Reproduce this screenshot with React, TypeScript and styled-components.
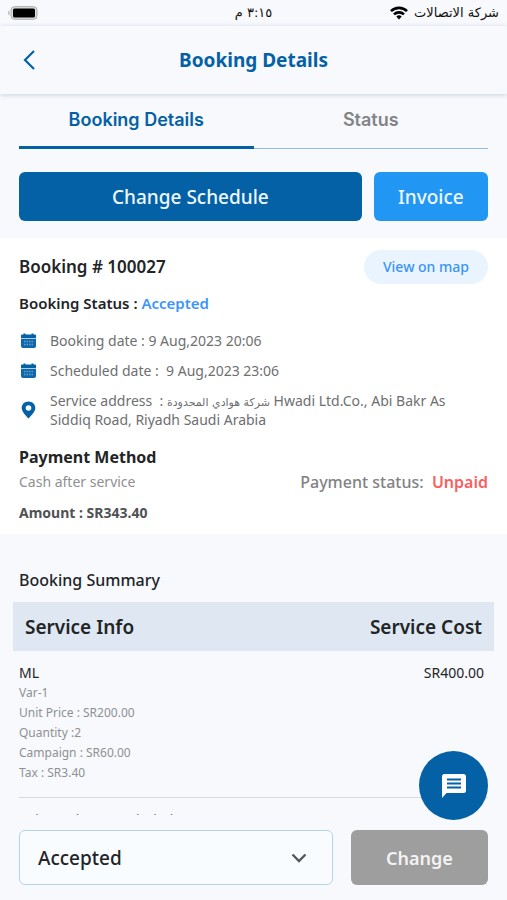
import React, { useState } from 'react';
import styled, { createGlobalStyle } from 'styled-components';

const sans = '"Noto Sans", "Open Sans", "DejaVu Sans", sans-serif';
const c = {
  page: '#f7f9fd',
  primary: '#0461a5',
  accent: '#2196f3',
  ink: '#222426',
  muted: '#6e6f71',
  faint: '#8f9092',
};

const GlobalStyle = createGlobalStyle`
  *, *::before, *::after { box-sizing: border-box; }
  body { margin: 0; background: ${c.page}; color: ${c.ink}; font-family: ${sans}; }
  button, select { font-family: inherit; cursor: pointer; }
  h1, h2, h3, p, dl, dd, ul { margin: 0; padding: 0; }
`;

const Screen = styled.div`
  display: flex;
  flex-direction: column;
  height: 100vh;
  background: ${c.page};
`;

const StatusBar = styled.div`
  display: grid;
  grid-template-columns: 1fr auto 1fr;
  align-items: center;
  height: 26px;
  padding: 0 8px;
  color: #111;
  font-family: "DejaVu Sans", sans-serif;
  font-size: 13px;
  line-height: 20px;
`;

const Carrier = styled.div`
  display: flex;
  align-items: center;
  justify-content: flex-end;
  gap: 6px;
  white-space: nowrap;
`;

const AppBar = styled.header`
  display: grid;
  grid-template-columns: 32px 1fr 32px;
  align-items: center;
  flex: none;
  height: 68px;
  padding: 0 13px;
  box-shadow: 0 1px 5px rgba(60, 90, 110, 0.24);
  position: relative;
  z-index: 1;
`;

const BackButton = styled.button`
  display: grid;
  place-items: center;
  width: 32px;
  height: 32px;
  padding: 0;
  border: 0;
  background: none;
  color: ${c.primary};
`;

const Title = styled.h1`
  color: ${c.primary};
  font-size: 19px;
  line-height: 24px;
  font-weight: 700;
  text-align: center;
`;

const Tabs = styled.div`
  display: flex;
  flex: none;
  margin: 0 19px;
  border-bottom: 1px solid #8fbce0;
`;

const Tab = styled.button<{ $active: boolean }>`
  flex: 1;
  height: 55px;
  margin-bottom: -1px;
  padding: 0;
  border: 0;
  border-bottom: 3px solid ${(p) => (p.$active ? c.primary : 'transparent')};
  background: none;
  color: ${(p) => (p.$active ? c.primary : '#828486')};
  font-family: Inter, sans-serif;
  font-size: 18px;
  line-height: 24px;
  font-weight: 600;
`;

const Scroll = styled.main`
  flex: 1;
  min-height: 0;
  overflow-y: auto;
  scrollbar-width: none;
`;

const Actions = styled.div`
  display: flex;
  gap: 12px;
  padding: 23px 19px 17px;
`;

const Action = styled.button<{ $fill: string; $grow?: boolean }>`
  flex: ${(p) => (p.$grow ? '3' : '1')} 1 0;
  height: 49px;
  padding: 0;
  border: 0;
  border-radius: 6px;
  background: ${(p) => p.$fill};
  color: #eef7ff;
  font-size: 19px;
  line-height: 24px;
  font-weight: 500;
`;

const Card = styled.section`
  padding: 12px 19px 9px;
  background: #fff;
`;

const Row = styled.div`
  display: flex;
  align-items: center;
  justify-content: space-between;
`;

const Heading = styled.h2<{ $size?: number; $weight?: number }>`
  font-size: ${(p) => p.$size ?? 16}px;
  line-height: 24px;
  font-weight: ${(p) => p.$weight ?? 700};
`;

const MapLink = styled.a`
  padding: 5px 19px;
  border-radius: 17px;
  background: #e9f4fe;
  color: #3994f4;
  font-size: 14px;
  line-height: 24px;
  font-weight: 500;
  text-decoration: none;
`;

const Status = styled.p`
  margin-top: 7px;
  font-size: 15px;
  line-height: 24px;
  font-weight: 600;

  span { color: #3d96f5; }
`;

const Facts = styled.ul`
  display: flex;
  flex-direction: column;
  gap: 11px;
  margin-top: 16px;
  list-style: none;
`;

const Fact = styled.li`
  display: grid;
  grid-template-columns: 19px 1fr;
  align-items: center;
  gap: 12px;
  padding-right: 24px;
  color: ${c.muted};
  font-size: 14px;
  line-height: 19px;
  white-space: pre-wrap;

  svg { color: ${c.primary}; }
`;

const Arabic = styled.span`
  font-family: "DejaVu Sans", sans-serif;
  font-size: 11px;
  line-height: 1;
`;

const Payment = styled.div`
  margin-top: 16px;
`;

const Method = styled.p`
  color: ${c.faint};
  font-size: 14px;
  line-height: 26px;
`;

const PaymentStatus = styled.p`
  color: #818284;
  font-size: 16px;
  line-height: 26px;
  font-weight: 500;
  white-space: pre;

  span { color: #f9605f; font-weight: 600; }
`;

const Amount = styled.p`
  margin-top: 6px;
  color: #505254;
  font-size: 14px;
  line-height: 24px;
  font-weight: 700;
`;

const Summary = styled.section`
  padding: 34px 13px 0;

  h2 { padding: 0 6px; }
`;

const CostTable = styled.table`
  width: 100%;
  margin-top: 10px;
  border-collapse: collapse;

  th {
    height: 49px;
    padding: 0 12px;
    background: #dfe8f2;
    font-size: 19px;
    line-height: 24px;
    font-weight: 600;
    text-align: left;
  }
  td {
    padding: 12px 6px 14px;
    font-size: 14px;
    line-height: 20px;
    vertical-align: top;
  }
  th:last-child { text-align: right; }
  td:last-child { padding-right: 10px; text-align: right; }
`;

const Detail = styled.p`
  color: ${c.faint};
  font-size: 12px;
  line-height: 20px;
`;

const Totals = styled.div`
  display: flex;
  justify-content: space-between;
  margin: 0 6px;
  padding: 12px 4px 20px 0;
  border-top: 1px solid #d6dbe0;
  color: ${c.muted};
  font-size: 14px;
  line-height: 20px;
`;

const BottomBar = styled.form`
  display: flex;
  flex: none;
  gap: 18px;
  padding: 15px 19px;
  position: relative;
`;

const SelectBox = styled.div`
  display: grid;
  flex: 314 1 0;
  align-items: center;

  > * { grid-area: 1 / 1; }
  svg { justify-self: end; margin-right: 25px; pointer-events: none; color: #55585b; }
`;

const Select = styled.select`
  appearance: none;
  width: 100%;
  height: 55px;
  padding: 0 50px 0 18px;
  border: 1px solid #b4d3e8;
  border-radius: 6px;
  background: #f9fcff;
  color: ${c.ink};
  font-size: 19px;
  font-weight: 500;
`;

const ChangeButton = styled.button`
  flex: 137 1 0;
  height: 55px;
  padding: 0;
  border: 0;
  border-radius: 6px;
  background: #9e9e9e;
  color: #f3f3f3;
  font-size: 18px;
  line-height: 24px;
  font-weight: 600;
`;

const ChatButton = styled.button`
  position: absolute;
  right: 19px;
  bottom: 80px;
  display: grid;
  place-items: center;
  width: 69px;
  height: 69px;
  padding: 0;
  border: 0;
  border-radius: 50%;
  background: ${c.primary};
  color: #fff;
`;

const Battery = () => (
  <svg width="30" height="14" viewBox="0 0 30 14" role="img" aria-label="Battery">
    <path d="M1.5 4.5v5C.6 9.200 0 8.300 0 7s.6-2.200 1.500-2.500z" fill="#b9bbbe" />
    <rect x="3" y=".7" width="26" height="12.600" rx="3.500" fill="#dcdddf" stroke="#a9abae" />
    <rect x="5" y="2.500" width="22" height="9" rx="1.500" fill="#000" />
  </svg>
);

const Wifi = () => (
  <svg width="18" height="14" viewBox="0 0 18 14" fill="none" stroke="#000" strokeWidth="2.600" role="img" aria-label="Wi-Fi">
    <path d="M1 5.100a11.500 11.500 0 0 1 16 0" />
    <path d="M4 8.400a7.200 7.200 0 0 1 10 0" />
    <path d="M9 13.500l-2.700-2.900a3.900 3.900 0 0 1 5.400 0z" fill="#000" stroke="none" />
  </svg>
);

const Calendar = () => (
  <svg width="19" height="16" viewBox="0 0 19 16" aria-hidden="true">
    <path d="M4.500 0.500h2v1h6v-1h2v1h1.500a1 1 0 0 1 1 1V5H2V2.500a1 1 0 0 1 1-1h1.500z" fill="currentColor" />
    <path d="M2 5h15v1H2z" fill="#a9cbe4" />
    <path d="M2 6h15v7a2 2 0 0 1-2 2H4a2 2 0 0 1-2-2z" fill="#0f68ab" />
    <path d="M5 8.500h9M5 11.500h9" stroke="#5f9dcb" strokeWidth="1.500" strokeDasharray="1.500 1" />
  </svg>
);

const Pin = () => (
  <svg width="19" height="18" viewBox="0 0 19 18" aria-hidden="true">
    <path
      fill="currentColor"
      fillRule="evenodd"
      d="M9.500 0.500C5.600 0.500 2.700 3.300 2.700 6.900c0 4.200 4.900 8.200 6.800 10.600C11.400 15.100 16.300 11.100 16.300 6.900 16.300 3.300 13.400 0.500 9.500 0.500zm0 3.700a2.800 2.800 0 1 1 0 5.600 2.800 2.800 0 0 1 0-5.600z"
    />
  </svg>
);

const details = ['Var-1', 'Unit Price : SR200.00', 'Quantity :2', 'Campaign : SR60.00', 'Tax : SR3.40'];
const tabs = ['Booking Details', 'Status'];

export default function App() {
  const [active, setActive] = useState(tabs[0]);

  return (
    <Screen>
      <GlobalStyle />
      <StatusBar>
        <Battery />
        <span dir="rtl" lang="ar">٣:١٥ م</span>
        <Carrier>
          <Wifi />
          <span dir="rtl" lang="ar">شركة الاتصالات</span>
        </Carrier>
      </StatusBar>

      <AppBar>
        <BackButton type="button" aria-label="Back">
          <svg width="14" height="20" viewBox="0 0 14 20" fill="none" stroke="currentColor" strokeWidth="2.200">
            <path d="M12 1L3 10l9 9" />
          </svg>
        </BackButton>
        <Title>Booking Details</Title>
      </AppBar>

      <Tabs role="tablist">
        {tabs.map((tab) => (
          <Tab key={tab} type="button" role="tab" aria-selected={tab === active} $active={tab === active} onClick={() => setActive(tab)}>
            {tab}
          </Tab>
        ))}
      </Tabs>

      <Scroll>
        <Actions>
          <Action type="button" $fill={c.primary} $grow>Change Schedule</Action>
          <Action type="button" $fill={c.accent}>Invoice</Action>
        </Actions>

        <Card>
          <Row>
            <Heading $size={17} $weight={600}>Booking # 100027</Heading>
            <MapLink href="#map">View on map</MapLink>
          </Row>
          <Status>Booking Status : <span>Accepted</span></Status>
          <Facts>
            <Fact><Calendar /><span>Booking date : 9 Aug,2023 20:06</span></Fact>
            <Fact><Calendar /><span>{'Scheduled date :  9 Aug,2023 23:06'}</span></Fact>
            <Fact>
              <Pin />
              <span>
                {'Service address  : '}
                <Arabic lang="ar">شركة هوادي المحدودة</Arabic>
                {' Hwadi Ltd.Co., Abi Bakr As Siddiq Road, Riyadh Saudi Arabia'}
              </span>
            </Fact>
          </Facts>
          <Payment>
            <Heading>Payment Method</Heading>
            <Row>
              <Method>Cash after service</Method>
              <PaymentStatus>{'Payment status:  '}<span>Unpaid</span></PaymentStatus>
            </Row>
            <Amount>Amount : SR343.40</Amount>
          </Payment>
        </Card>

        <Summary>
          <Heading $weight={500}>Booking Summary</Heading>
          <CostTable>
            <thead>
              <tr>
                <th scope="col">Service Info</th>
                <th scope="col">Service Cost</th>
              </tr>
            </thead>
            <tbody>
              <tr>
                <td>
                  ML
                  {details.map((line) => <Detail key={line}>{line}</Detail>)}
                </td>
                <td>SR400.00</td>
              </tr>
            </tbody>
          </CostTable>
          <Totals>
            <span>Sub Total (VAT excluded)</span>
            <span>SR400.00</span>
          </Totals>
        </Summary>
      </Scroll>

      <BottomBar onSubmit={(e) => e.preventDefault()}>
        <SelectBox>
          <Select aria-label="Booking status" defaultValue="Accepted">
            <option>Accepted</option>
            <option>Ongoing</option>
            <option>Completed</option>
            <option>Canceled</option>
          </Select>
          <svg width="18" height="12" viewBox="0 0 18 12" fill="none" stroke="currentColor" strokeWidth="2.400" aria-hidden="true">
            <path d="M2.500 2.500L9 9l6.500-6.500" />
          </svg>
        </SelectBox>
        <ChangeButton type="submit">Change</ChangeButton>
        <ChatButton type="button" aria-label="Chat">
          <svg width="26" height="26" viewBox="0 0 26 26" aria-hidden="true">
            <path fill="currentColor" d="M3.500 1h19A2.500 2.500 0 0 1 25 3.500v14a2.500 2.500 0 0 1-2.500 2.500H5.500L1 25V3.500A2.500 2.500 0 0 1 3.500 1z" />
            <path stroke={c.primary} strokeWidth="2.200" d="M6 6.500h14M6 10.500h14M6 14.500h14" />
          </svg>
        </ChatButton>
      </BottomBar>
    </Screen>
  );
}
